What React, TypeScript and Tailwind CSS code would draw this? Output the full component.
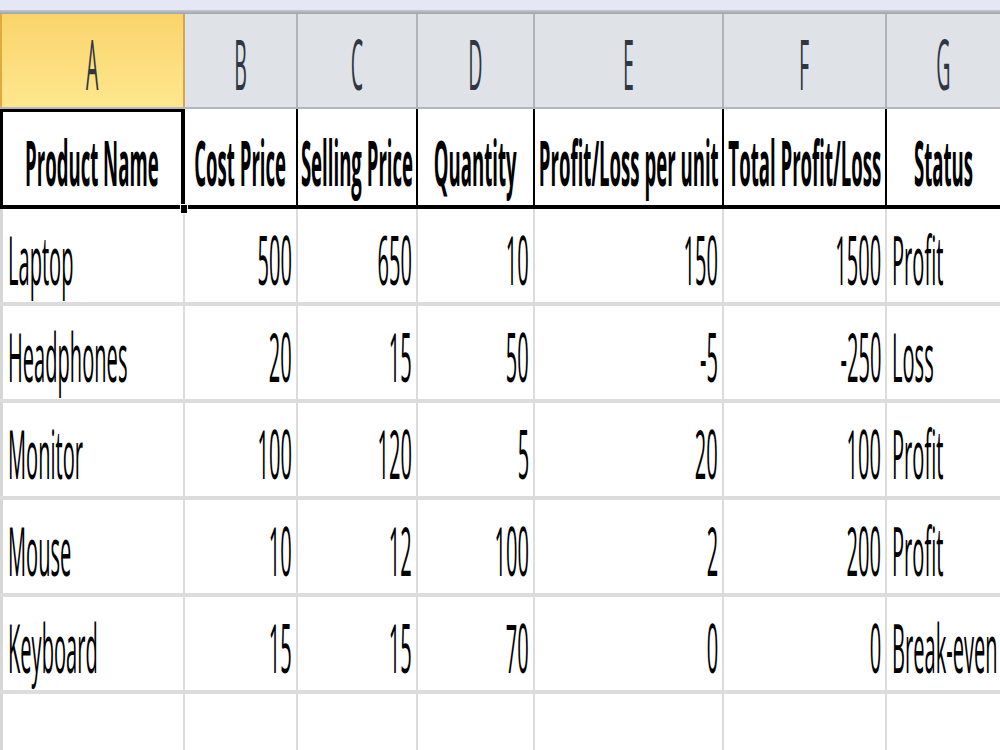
import React from "react";

const cols = [
  { w: 185 },
  { w: 113 },
  { w: 120 },
  { w: 117 },
  { w: 189 },
  { w: 163 },
  { w: 113 },
];
const letters = ["A", "B", "C", "D", "E", "F", "G"];
const headers = [
  "Product Name",
  "Cost Price",
  "Selling Price",
  "Quantity",
  "Profit/Loss per unit",
  "Total Profit/Loss",
  "Status",
];
const rows: (string | number)[][] = [
  ["Laptop", 500, 650, 10, 150, 1500, "Profit"],
  ["Headphones", 20, 15, 50, -5, -250, "Loss"],
  ["Monitor", 100, 120, 5, 20, 100, "Profit"],
  ["Mouse", 10, 12, 100, 2, 200, "Profit"],
  ["Keyboard", 15, 15, 70, 0, 0, "Break-even"],
];

function Txt({
  children,
  align,
  bold,
  size,
  color,
  scale,
}: {
  children: React.ReactNode;
  align: "left" | "right" | "center";
  bold?: boolean;
  size: string;
  color?: string;
  scale: string;
}) {
  const origin =
    align === "left" ? "origin-left" : align === "right" ? "origin-right" : "origin-center";
  return (
    <span
      className={`inline-block whitespace-nowrap leading-none ${scale} ${origin} ${
        bold ? "font-bold" : "font-normal"
      } ${size} ${color ?? "text-black"}`}
    >
      {children}
    </span>
  );
}

export default function App() {
  return (
    <div
      className="w-[1000px] h-[750px] overflow-hidden bg-white relative"
      style={{ fontFamily: '"Open Sans", "Noto Sans", sans-serif' }}
    >
      {/* top strip */}
      <div className="h-[10px] bg-[#e5e8f4]" />
      <div className="h-[4px] bg-gradient-to-b from-[#c3c7ce] to-[#9ea2a9]" />

      {/* column header letters */}
      <div className="flex h-[95px] border-b-[2px] border-[#b3b7bd]">
        {cols.map((c, i) => (
          <div
            key={i}
            style={{ width: c.w }}
            className={`shrink-0 flex items-end justify-center pb-[9px] overflow-visible ${
              i === 0
                ? "bg-gradient-to-b from-[#f9d46a] to-[#ffe78e] border-r-[2px] border-[#d9a54a] border-l-[2px] border-l-[#e4a93e]"
                : i === cols.length - 1
                ? "bg-[#dfe2e7] grow"
                : "bg-[#dfe2e7] border-r-[2px] border-[#b0b4ba]"
            }`}
          >
            <Txt align="center" size="text-[70px]" scale="scale-x-[0.28]" color="text-[#2f3742]">
              {letters[i]}
            </Txt>
          </div>
        ))}
      </div>

      {/* header labels row */}
      <div className="flex h-[100px] border-b-[4px] border-black">
        {cols.map((c, i) => (
          <div
            key={i}
            style={{ width: c.w }}
            className={`relative shrink-0 flex items-end justify-center pb-[12px] ${
              i === cols.length - 1 ? "grow" : "border-r-[2px] border-black"
            }`}
          >
            <Txt align="center" bold size="text-[62px]" scale="scale-x-[0.30]">
              {headers[i]}
            </Txt>
            {i === 0 && (
              <>
                <div className="absolute left-0 top-0 right-[-1px] bottom-[-3px] border-[3px] border-black" />
                <div className="absolute right-[-5px] bottom-[-9px] w-[8px] h-[10px] bg-black border border-white" />
              </>
            )}
          </div>
        ))}
      </div>

      {/* data rows */}
      {rows.map((r, ri) => (
        <div key={ri} className="flex h-[97px] border-b-[4px] border-[#dcdcdc]">
          {cols.map((c, i) => {
            const v = r[i];
            const isNum = typeof v === "number";
            return (
              <div
                key={i}
                style={{ width: c.w }}
                className={`shrink-0 flex items-end pb-[9px] ${
                  isNum ? "justify-end pr-[4px]" : "justify-start pl-[5px]"
                } ${
                  i === cols.length - 1 ? "grow" : "border-r-[2px] border-[#dcdcdc]"
                } ${i === 0 ? "border-l-[3px] border-l-[#d6d6d6]" : ""}`}
              >
                <Txt align={isNum ? "right" : "left"} size="text-[67px]" scale="scale-x-[0.30]">
                  {String(v)}
                </Txt>
              </div>
            );
          })}
        </div>
      ))}

      {/* partial empty row */}
      <div className="flex h-[97px]">
        {cols.map((c, i) => (
          <div
            key={i}
            style={{ width: c.w }}
            className={`shrink-0 ${
              i === cols.length - 1 ? "grow" : "border-r-[2px] border-[#dcdcdc]"
            } ${i === 0 ? "border-l-[3px] border-l-[#d6d6d6]" : ""}`}
          />
        ))}
      </div>
    </div>
  );
}
